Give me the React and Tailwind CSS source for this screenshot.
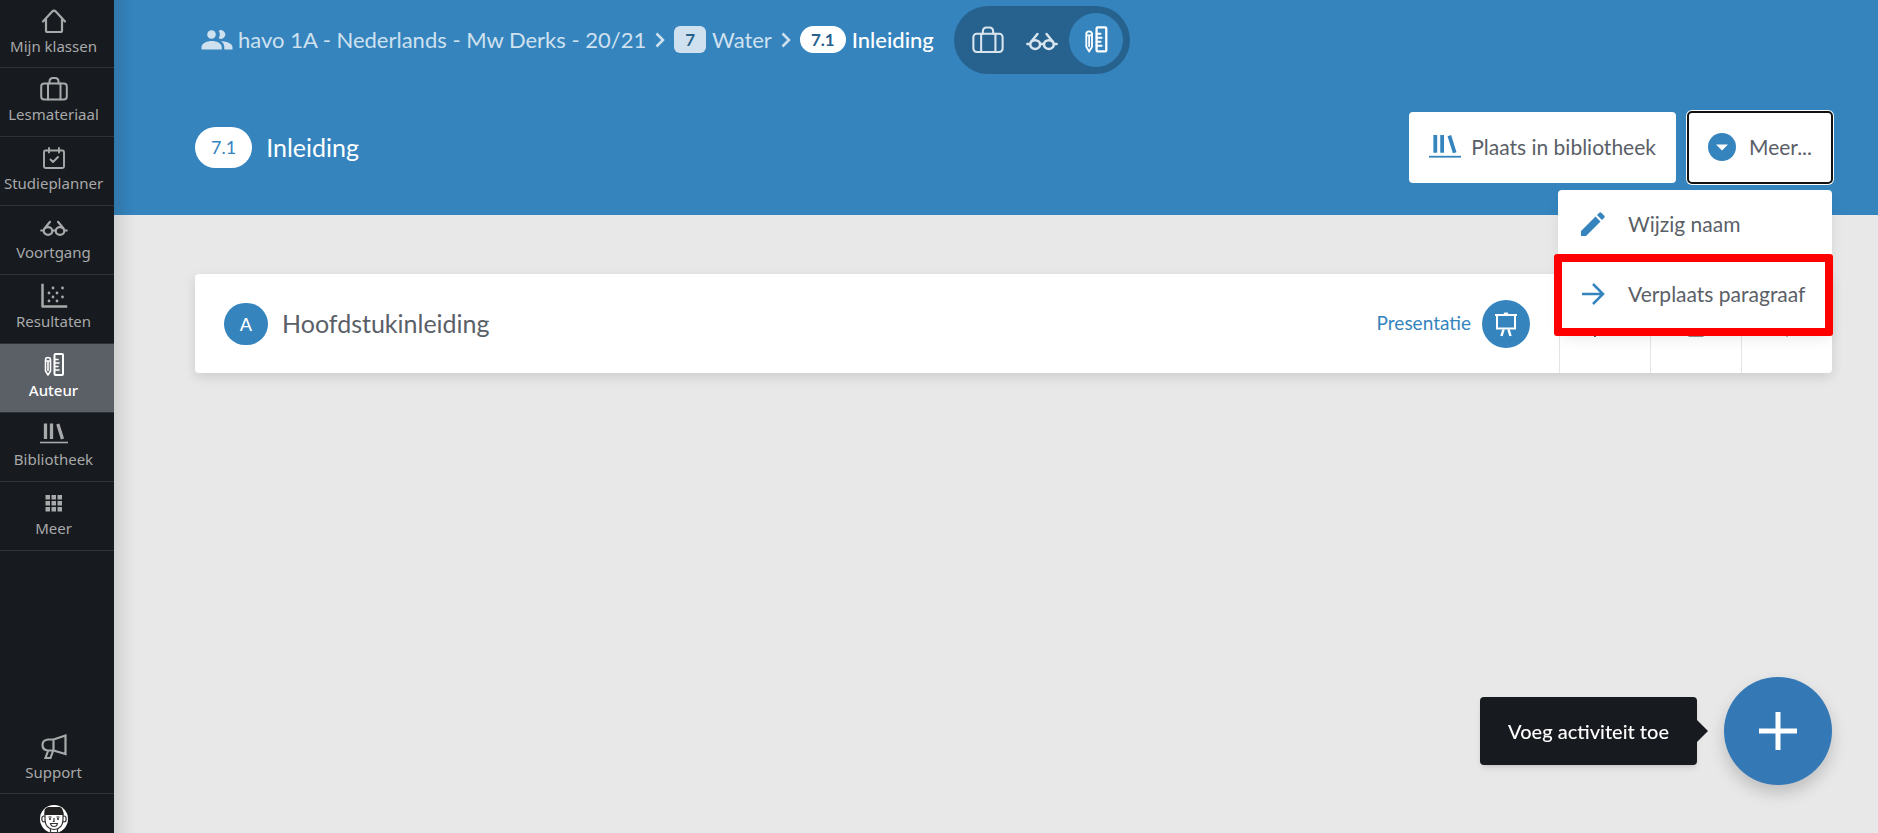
import React from "react";

const Svg = ({ children, className = "", box = "0 0 28 28", width = 2 }) => (
  <svg viewBox={box} className={className} fill="none" stroke="currentColor" strokeWidth={width} strokeLinejoin="round" strokeLinecap="round" aria-hidden="true">
    {children}
  </svg>
);

const HomeIcon = () => (
  <Svg className="size-7" width={2.200}>
    <path d="M3 14.500 12.200 4.600Q14 2.800 15.800 4.600L25 14.500M6 12V23.500Q6 25 7.500 25H20.500Q22 25 22 23.500V12" />
  </Svg>
);

const CaseIcon = ({ className = "size-7", width = 2 }) => (
  <Svg className={className} width={width}>
    <rect x="1.200" y="8.500" width="25.600" height="16" rx="3" />
    <path d="M8 8.500V24.500M20.500 8.500V24.500M9.500 8.500V6.500Q9.500 3 13 3H15Q18.500 3 18.500 6.500V8.500" />
  </Svg>
);

const PlannerIcon = () => (
  <Svg className="size-7" width={1.900}>
    <rect x="4" y="6.500" width="20" height="17.500" rx="1.500" />
    <path d="M9 4V8.500M19 4V8.500M10.500 15.500 13 18 18 13" />
  </Svg>
);

const GlassesIcon = ({ className = "size-7", width = 2.200 }) => (
  <Svg className={className} width={width}>
    <ellipse cx="8" cy="18" rx="4.300" ry="3.800" />
    <ellipse cx="20" cy="18" rx="4.300" ry="3.800" />
    <path d="M1.200 17.500H3.500M24.500 17.500H26.800M12.300 17.500H15.700M4.500 15.500 10 8.800M23.500 15.500 18 8.800" />
  </Svg>
);

const ScatterIcon = () => (
  <Svg className="size-7" width={2.500}>
    <path d="M2.500 3V24.500H26" strokeLinecap="square" />
    <g fill="currentColor" stroke="none">
      {[[13, 6], [22.5, 6], [9, 11], [17, 11], [13, 15], [22.5, 15], [9, 19], [17, 19]].map(([x, y]) => (
        <circle key={`${x}-${y}`} cx={x} cy={y} r="1.400" />
      ))}
    </g>
  </Svg>
);

const AuthorIcon = ({ className = "size-7" }) => (
  <Svg className={className} width={2}>
    <path d="M5.500 9Q5.500 6.500 8 6.500T10.500 9V20L8 24 5.500 20ZM5.500 10H10.500M8 10.500V19.500" strokeWidth="1.600" />
    <rect x="14.500" y="3" width="8.500" height="21" rx="1" />
    <path d="M14.500 8.500H18M14.500 12H19M14.500 15.500H18M14.500 19H19" strokeWidth="1.600" />
  </Svg>
);

const LibraryIcon = ({ className = "size-7" }) => (
  <Svg className={className} width={3.300}>
    <path d="M5.500 3.500V19M11.500 3.500V19M17.800 4 22.500 19" strokeLinecap="butt" />
    <path d="M0 22.500H28" strokeWidth="1.600" strokeLinecap="butt" />
  </Svg>
);

const GridIcon = () => (
  <svg viewBox="0 0 28 28" className="size-7" fill="currentColor" aria-hidden="true">
    {[6, 12, 18].map((y) => [5.5, 11.5, 17.5].map((x) => <rect key={`${x}-${y}`} x={x} y={y} width="4.500" height="4.500" />))}
  </svg>
);

const MegaphoneIcon = () => (
  <Svg className="size-7" width={2.200}>
    <path d="M13.500 6.500H8Q2.500 7 2.500 12T8 17.500H13.500ZM13.500 6.500 25.500 2.500V21L13.500 17.500M8 18 5.500 25H10.500L13 18" strokeLinejoin="miter" />
  </Svg>
);

const Avatar = () => (
  <svg viewBox="0 0 28 28" className="size-7" aria-hidden="true">
    <circle cx="14" cy="14" r="14" fill="#fff" />
    <g fill="#fff" stroke="#333" strokeWidth="1.200">
      <path d="M10.500 22V27.500H17.500V22" />
      <ellipse cx="4" cy="14" rx="2.200" ry="3" />
      <ellipse cx="24" cy="14" rx="2.200" ry="3" />
      <path d="M5 8H23V15Q22.500 24 14 24.500Q5.500 24 5 15Z" />
      <path d="M10.500 18.500H17.500Q17 21.500 14 21.500T10.500 18.500ZM14 13V16.500H12.800" />
    </g>
    <path d="M4.500 10V5Q6 2 9 2H20Q23.500 3.500 23.500 10Z" fill="#222" />
    <path d="M8.500 12H11.500M16.500 12H19.500" stroke="#222" strokeWidth="1" />
    <circle cx="10" cy="14" r="1" fill="#222" />
    <circle cx="18" cy="14" r="1" fill="#222" />
  </svg>
);

const PeopleIcon = () => (
  <svg viewBox="0 0 31 20" className="h-5 w-8" fill="currentColor" aria-hidden="true">
    <circle cx="10" cy="4.500" r="4.300" />
    <path d="M17.200 8.200A4.300 4.300 0 1 0 17.200.8 7 7 0 0 1 17.200 8.200Z" />
    <path d="M0 19.500V17.200C0 13 6 11 10.300 11S20.300 13 20.300 17.200V19.500ZM21 11.200C25 11.500 31 13.300 31 17.200V19.500H22.800V17Q22.800 13.500 19.500 11.200Z" />
  </svg>
);

const Chevron = () => (
  <Svg box="0 0 10 16" className="h-4 w-[10px] shrink-0" width={2.500}>
    <path d="M1.500 1.500 8 8 1.500 14.500" strokeLinecap="butt" strokeLinejoin="miter" />
  </Svg>
);

const EaselIcon = () => (
  <Svg box="0 0 24 26" className="h-[26px] w-6" width={2}>
    <path d="M3 4V17.500H21V4M1 4H23" strokeLinecap="butt" strokeLinejoin="miter" />
    <path d="M9.500 18.500 7.500 25M14.500 18.500 16.500 25" strokeWidth="2.500" strokeLinecap="butt" />
    <path d="M11 2.800H13" strokeWidth="2.500" />
  </Svg>
);

const items = [
  ["Mijn klassen", HomeIcon],
  ["Lesmateriaal", CaseIcon],
  ["Studieplanner", PlannerIcon],
  ["Voortgang", GlassesIcon],
  ["Resultaten", ScatterIcon],
  ["Auteur", AuthorIcon],
  ["Bibliotheek", LibraryIcon],
  ["Meer", GridIcon],
];

function SideItem({ label, Icon, active }) {
  return (
    <a
      href="#"
      aria-current={active ? "page" : undefined}
      className={`flex h-[69px] flex-col items-center border-b border-[#2d3238] pt-[7px] pr-[7px] text-[15px] leading-[22px] first:h-[68px] ${active ? "bg-[#5b6067] font-medium text-white" : "text-[#a8a9aa]"}`}
    >
      <Icon />
      <span>{label}</span>
    </a>
  );
}

function Sidebar() {
  return (
    <nav aria-label="Hoofdmenu" className="sticky top-0 z-10 flex h-screen w-[114px] shrink-0 flex-col justify-between overflow-hidden bg-[#171a1e] font-['Noto_Sans',sans-serif]">
      <div>
        {items.map(([label, Icon]) => (
          <SideItem key={label} label={label} Icon={Icon} active={label === "Auteur"} />
        ))}
      </div>
      <div>
        <SideItem label="Support" Icon={MegaphoneIcon} />
        <button type="button" aria-label="Profiel" className="flex w-full justify-center pt-[11px] pr-[7px]">
          <Avatar />
        </button>
      </div>
    </nav>
  );
}

function Breadcrumb() {
  return (
    <div className="flex h-[78px] items-center gap-5 pt-px pl-[6px]">
      <nav aria-label="Kruimelpad" className="flex items-center gap-[9px] text-[22px] leading-[26px] text-[#cfe1ef]">
        <a href="#" className="flex items-center gap-[5px]">
          <PeopleIcon />
          havo 1A - Nederlands - Mw Derks - 20/21
        </a>
        <Chevron />
        <a href="#" className="flex items-center gap-[6px]">
          <span className="rounded-md bg-[#cfe1ef] px-[11px] text-[17px] leading-[27px] font-bold text-[#27628e]">7</span>
          Water
        </a>
        <Chevron />
        <a href="#" aria-current="page" className="flex items-center gap-[6px] font-medium text-white">
          <span className="rounded-full bg-white px-[11px] text-[17px] leading-[27px] font-bold text-[#27628e]">7.1</span>
          Inleiding
        </a>
      </nav>
      <div className="flex items-center rounded-full bg-[#27628e] p-[7px] text-[#d9e5ee]">
        <button type="button" aria-label="Lesmateriaal" className="flex size-[54px] items-center justify-center">
          <CaseIcon className="size-8" width={1.800} />
        </button>
        <button type="button" aria-label="Voortgang" className="flex size-[54px] items-center justify-center">
          <GlassesIcon className="size-8" />
        </button>
        <button type="button" aria-label="Auteur" aria-pressed="true" className="flex size-[54px] items-center justify-center rounded-full bg-[#3584be] text-white">
          <AuthorIcon className="size-8" />
        </button>
      </div>
    </div>
  );
}

function MoreMenu() {
  return (
    <div className="absolute top-full right-0 z-20 mt-[7px] w-[274px] rounded bg-white shadow-lg">
      <button type="button" className="flex h-[70px] w-full items-center gap-[22px] px-[22px] pb-[2px] whitespace-nowrap">
        <svg viewBox="0 0 26 26" className="size-[26px] shrink-0 text-[#3584be]" fill="currentColor" aria-hidden="true">
          <path d="M1 20 15.500 5.500 20.500 10.500 6 25H1ZM17 4 19.300 1.700Q20.300.700 21.300 1.700L24.300 4.700Q25.300 5.700 24.300 6.700L22 9Z" />
        </svg>
        Wijzig naam
      </button>
      <button type="button" className="relative flex h-[70px] w-full items-center gap-[22px] px-[22px] pb-[2px] whitespace-nowrap">
        <Svg box="0 0 26 26" className="size-[26px] shrink-0 text-[#3584be]" width={2.500}>
          <path d="M2 13H22M13 3 23 13 13 23" strokeLinecap="butt" strokeLinejoin="miter" />
        </Svg>
        Verplaats paragraaf
        <span className="absolute -top-[6px] -right-px -bottom-[6px] -left-1 rounded-[3px] border-8 border-[#fe0000]" />
      </button>
    </div>
  );
}

function Header() {
  return (
    <header className="bg-[#3584be] pr-[46px] pb-8 pl-[81px]">
      <Breadcrumb />
      <div className="flex items-center justify-between pt-[34px]">
        <div className="flex items-center gap-[14px] text-white">
          <span className="rounded-full bg-white px-4 text-lg leading-[41px] text-[#3584be]">7.1</span>
          <h1 className="text-[25px] leading-[41px]">Inleiding</h1>
        </div>
        <div className="flex gap-3 text-[21px] text-[#5a6067]">
          <button type="button" className="flex h-[71px] items-center gap-[10px] rounded bg-white pr-5 pb-[2px] pl-5">
            <LibraryIcon className="size-8 text-[#3584be]" />
            Plaats in bibliotheek
          </button>
          <div className="relative">
            <button type="button" aria-expanded="true" className="flex h-[71px] items-center gap-[13px] rounded bg-white px-5 pb-[2px] ring-2 ring-white outline-2 -outline-offset-1 outline-[#111]">
              <svg viewBox="0 0 28 28" className="size-7 shrink-0" aria-hidden="true">
                <circle cx="14" cy="14" r="14" fill="#3584be" />
                <path d="M8 11.500H20L14 17.500Z" fill="#fff" />
              </svg>
              Meer...
            </button>
            <MoreMenu />
          </div>
        </div>
      </div>
    </header>
  );
}

function ActivityCard() {
  return (
    <article className="flex h-[99px] rounded bg-white shadow-[0_4px_12px_rgba(0,0,0,0.12)]">
      <div className="flex flex-1 items-center px-[29px]">
        <span className="flex h-[42px] w-11 items-center justify-center rounded-full bg-[#3584be] text-lg font-medium text-white">A</span>
        <h2 className="ml-[14px] flex-1 text-[25px] leading-[41px] text-[#5a6067]">Hoofdstukinleiding</h2>
        <span className="mr-[11px] text-[19px] text-[#3584be]">Presentatie</span>
        <span className="flex size-12 items-center justify-center rounded-full bg-[#3584be] text-white">
          <EaselIcon />
        </span>
      </div>
      <div className="flex text-[#222]">
        <button type="button" aria-label="Bewerken" className="flex w-[91px] items-center justify-center border-l border-[#e4e4e4] pr-5">
          <Svg className="size-7">
            <path d="M14 3 23 14 14 26 5 14Z" />
          </Svg>
        </button>
        <button type="button" aria-label="Kopiëren" className="flex w-[91px] items-center justify-center border-l border-[#e4e4e4]">
          <Svg className="size-7">
            <path d="M7 4H21V25.500H7Z" />
          </Svg>
        </button>
        <button type="button" aria-label="Verplaatsen" className="flex w-[91px] items-center justify-center border-l border-[#e4e4e4]">
          <Svg className="size-7">
            <path d="M14 3V25.500M10 7 14 3 18 7" />
          </Svg>
        </button>
      </div>
    </article>
  );
}

export default function App() {
  return (
    <div className="flex min-h-screen bg-[#e8e8e8] font-['Lato',sans-serif]">
      <Sidebar />
      <div className="relative min-w-0 flex-1">
        <Header />
        <main className="pt-[59px] pr-[46px] pl-[81px]">
          <ActivityCard />
        </main>
        <div className="pointer-events-none absolute inset-y-0 left-0 w-5 bg-linear-to-r from-black/10 to-transparent" />
      </div>
      <div className="fixed right-[46px] bottom-12 flex items-center gap-[27px]">
        <div role="tooltip" className="relative rounded bg-[#171a1e] px-7 text-xl leading-[68px] font-medium text-white shadow-md">
          Voeg activiteit toe
          <svg viewBox="0 0 11 22" className="absolute top-[23px] left-full h-[22px] w-[11px]" fill="#171a1e" aria-hidden="true">
            <path d="M0 0 11 11 0 22Z" />
          </svg>
        </div>
        <button type="button" aria-label="Voeg activiteit toe" className="flex size-[108px] items-center justify-center rounded-full bg-[#3478b6] text-white shadow-[0_8px_16px_rgba(0,0,0,0.18)]">
          <Svg box="0 0 38 38" className="size-[38px]" width={5}>
            <path d="M19 0V38M0 19H38" strokeLinecap="butt" />
          </Svg>
        </button>
      </div>
    </div>
  );
}
